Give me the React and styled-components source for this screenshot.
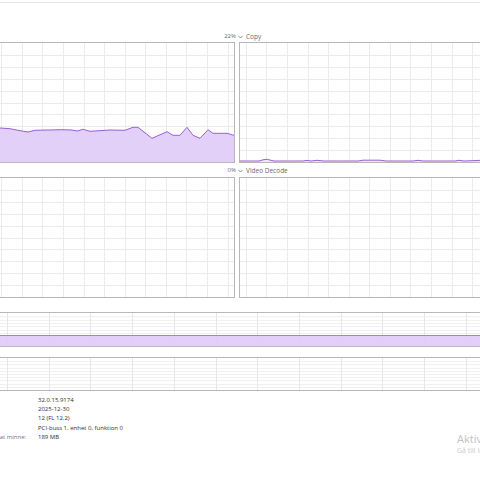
//Import Libraries
import React from 'react'
import styled, { createGlobalStyle } from 'styled-components'

//Global
const GlobalStyle = createGlobalStyle`
  html, body {
    margin: 0;
    padding: 0;
    background: #fff;
  }
  body {
    width: 480px;
    height: 480px;
    overflow: hidden;
    font-family: "Open Sans", "Noto Sans", sans-serif;
  }
`

//Styled
const Page = styled.div`
  position: relative;
  width: 480px;
  height: 480px;
  overflow: hidden;
  display: flex;
  flex-direction: column;
`
const TopRule = styled.div`
  flex-shrink: 0;
  margin-top: 2px;
  height: 1px;
  background: #e6e6e6;
`
const LabelRow = styled.div`
  flex-shrink: 0;
  display: flex;
  align-items: center;
  height: 9px;
  margin-top: ${p => p.$top}px;
  font-size: 6px;
  line-height: 9px;
  color: #6b6b6b;
  white-space: nowrap;
`
const Percent = styled.span`
  width: 236px;
  text-align: right;
`
const Title = styled.span`
  display: flex;
  align-items: center;
  gap: 3px;
  margin-left: 2px;
  font-size: 6.5px;
`
const ChartRow = styled.div`
  flex-shrink: 0;
  display: grid;
  grid-template-columns: 241px 245px;
  column-gap: 4px;
  margin-left: -6px;
  margin-top: ${p => p.$top}px;
`
const Panel = styled.div`
  box-sizing: border-box;
  height: 121px;
  border: 1px solid #b7b7b7;
  background: #fff;
  overflow: hidden;
  svg {
    display: block;
  }
`
const Strip = styled.div`
  flex-shrink: 0;
  box-sizing: border-box;
  height: ${p => p.$height}px;
  margin: ${p => p.$top}px -6px 0;
  border: 1px solid #b7b7b7;
  overflow: hidden;
  svg {
    display: block;
  }
`
const InfoGrid = styled.div`
  flex-shrink: 0;
  display: grid;
  grid-template-columns: 87px auto;
  column-gap: 7px;
  margin: 5px 0 0 -56px;
  font-size: 6px;
  line-height: 9.2px;
  white-space: nowrap;
`
const InfoLabel = styled.span`
  color: #737373;
`
const InfoValue = styled.span`
  color: #2e2e2e;
`
const Watermark = styled.div`
  position: absolute;
  left: 457px;
  top: 431px;
  white-space: nowrap;
  color: #c2c2c2;
`
const WatermarkTitle = styled.div`
  font-size: 11px;
  line-height: 15px;
`
const WatermarkSub = styled.div`
  font-size: 7px;
  line-height: 10px;
  color: #cacaca;
`

//Data
const copyLeft = [
  [-5, 128], [0, 128], [10, 128.7], [20, 130.7], [28, 132], [35, 130.3], [62, 129.7],
  [72, 130], [77, 131], [83, 129.3], [90, 131.3], [110, 130], [125, 130.3], [133, 127.3],
  [138, 127.3], [152, 138.3], [167, 131.7], [173, 135.3], [180, 135.3], [187, 127.3],
  [193, 135.3], [200, 138.3], [208, 129.7], [213, 133.3], [227, 133.3], [234, 135.3],
].map(([x, y]) => [x + 5, y - 43])

const copyRight = [
  [0, 118], [19, 118], [23, 116.8], [27, 116.3], [31, 117.3], [34, 118], [63, 118],
  [67, 117.4], [71, 118], [77, 117.3], [84, 118], [118, 118], [123, 117.2], [140, 117.2],
  [146, 118], [173, 118], [178, 117.3], [183, 118], [215, 118], [219, 117.3], [224, 118],
  [235, 117.6], [243, 117.2],
]

const infoRows = [
  ['Drivrutinsversion:', '32.0.15.9174'],
  ['Drivrutinsdatum:', '2025-12-30'],
  ['DirectX-version:', '12 (FL 12.2)'],
  ['Fysisk plats:', 'PCI-buss 1, enhet 0, funktion 0'],
  ['Maskinvarureserverat minne:', '189 MB'],
]

//Chart drawing
function GridChart({ width, height, offsetX, stepX, rows, data, fill }) {
  const vertical = []
  for (let x = offsetX; x < width; x += stepX) vertical.push(Math.round(x) + 0.5)
  const horizontal = []
  for (let i = 1; i < rows; i++) horizontal.push(Math.round((height / rows) * i) + 0.5)
  const line = data ? data.map(([x, y], i) => `${i ? 'L' : 'M'}${x} ${y}`).join(' ') : ''
  const area = data
    ? `${line} L${data[data.length - 1][0]} ${height} L${data[0][0]} ${height} Z`
    : ''
  return (
    <svg width={width} height={height} viewBox={`0 0 ${width} ${height}`}>
      <g stroke="#ebebeb" strokeWidth="1" shapeRendering="crispEdges">
        {vertical.map(x => <line key={`v${x}`} x1={x} y1="0" x2={x} y2={height} />)}
        {horizontal.map(y => <line key={`h${y}`} x1="0" y1={y} x2={width} y2={y} />)}
      </g>
      {data && <path d={area} fill={fill} stroke="none" />}
      {data && <path d={line} fill="none" stroke="#9b5fd1" strokeWidth="1" strokeLinejoin="round" />}
    </svg>
  )
}

function StripChart({ height, band }) {
  const width = 490
  const vertical = []
  for (let x = 12; x < width; x += 41.7) vertical.push(Math.round(x) + 0.5)
  const horizontal = []
  for (let i = 1; i < 10; i++) horizontal.push(Math.round((height / 10) * i) + 0.5)
  return (
    <svg width={width} height={height} viewBox={`0 0 ${width} ${height}`}>
      <g stroke="#f0f0f0" strokeWidth="1" shapeRendering="crispEdges">
        {horizontal.map(y => <line key={`h${y}`} x1="0" y1={y} x2={width} y2={y} />)}
      </g>
      <g stroke="#e6e6e6" strokeWidth="1" shapeRendering="crispEdges">
        {vertical.map(x => <line key={`v${x}`} x1={x} y1="0" x2={x} y2={height} />)}
      </g>
      {band && <rect x="0" y={band} width={width} height={height - band} fill="#dfcbf8" opacity="0.9" />}
      {band && <line x1="0" y1={band + 0.5} x2={width} y2={band + 0.5} stroke="#a87cd7" strokeWidth="1" />}
    </svg>
  )
}

function Chevron() {
  return (
    <svg width="5" height="4" viewBox="0 0 5 4">
      <path d="M0.5 1 L2.5 3 L4.5 1" fill="none" stroke="#7a7a7a" strokeWidth="0.8" />
    </svg>
  )
}

function EngineSection({ top, percent, title, left, right }) {
  return (
    <>
      <LabelRow $top={top}>
        <Percent>{percent}</Percent>
        <Title><Chevron />{title}</Title>
      </LabelRow>
      <ChartRow $top={top ? 2 : 1}>
        <Panel>
          <GridChart width={239} height={119} offsetX={6.1} stepX={20.6} rows={10} data={left} fill="#e2d0f9" />
        </Panel>
        <Panel>
          <GridChart width={243} height={119} offsetX={5.7} stepX={20.6} rows={10} data={right} fill="#efe6fb" />
        </Panel>
      </ChartRow>
    </>
  )
}

function App() {
  return (
    <>
      <GlobalStyle />
      <Page>
        <TopRule />
        <LabelRow $top={29}>
          <Percent>22%</Percent>
          <Title><Chevron />Copy</Title>
        </LabelRow>
        <ChartRow $top={1}>
          <Panel>
            <GridChart width={239} height={119} offsetX={6.1} stepX={20.6} rows={10} data={copyLeft} fill="#e2d0f9" />
          </Panel>
          <Panel>
            <GridChart width={243} height={119} offsetX={5.7} stepX={20.6} rows={10} data={copyRight} fill="#efe6fb" />
          </Panel>
        </ChartRow>
        <EngineSection top={3} percent="0%" title="Video Decode" />
        <Strip $top={14} $height={35}>
          <StripChart height={33} band={22} />
        </Strip>
        <Strip $top={10} $height={34}>
          <StripChart height={32} />
        </Strip>
        <InfoGrid>
          {infoRows.map(([label, value]) => (
            <React.Fragment key={label}>
              <InfoLabel>{label}</InfoLabel>
              <InfoValue>{value}</InfoValue>
            </React.Fragment>
          ))}
        </InfoGrid>
        <Watermark>
          <WatermarkTitle>Aktivera Windows</WatermarkTitle>
          <WatermarkSub>Gå till Inställningar för att aktivera Windows.</WatermarkSub>
        </Watermark>
      </Page>
    </>
  )
}

export default App
